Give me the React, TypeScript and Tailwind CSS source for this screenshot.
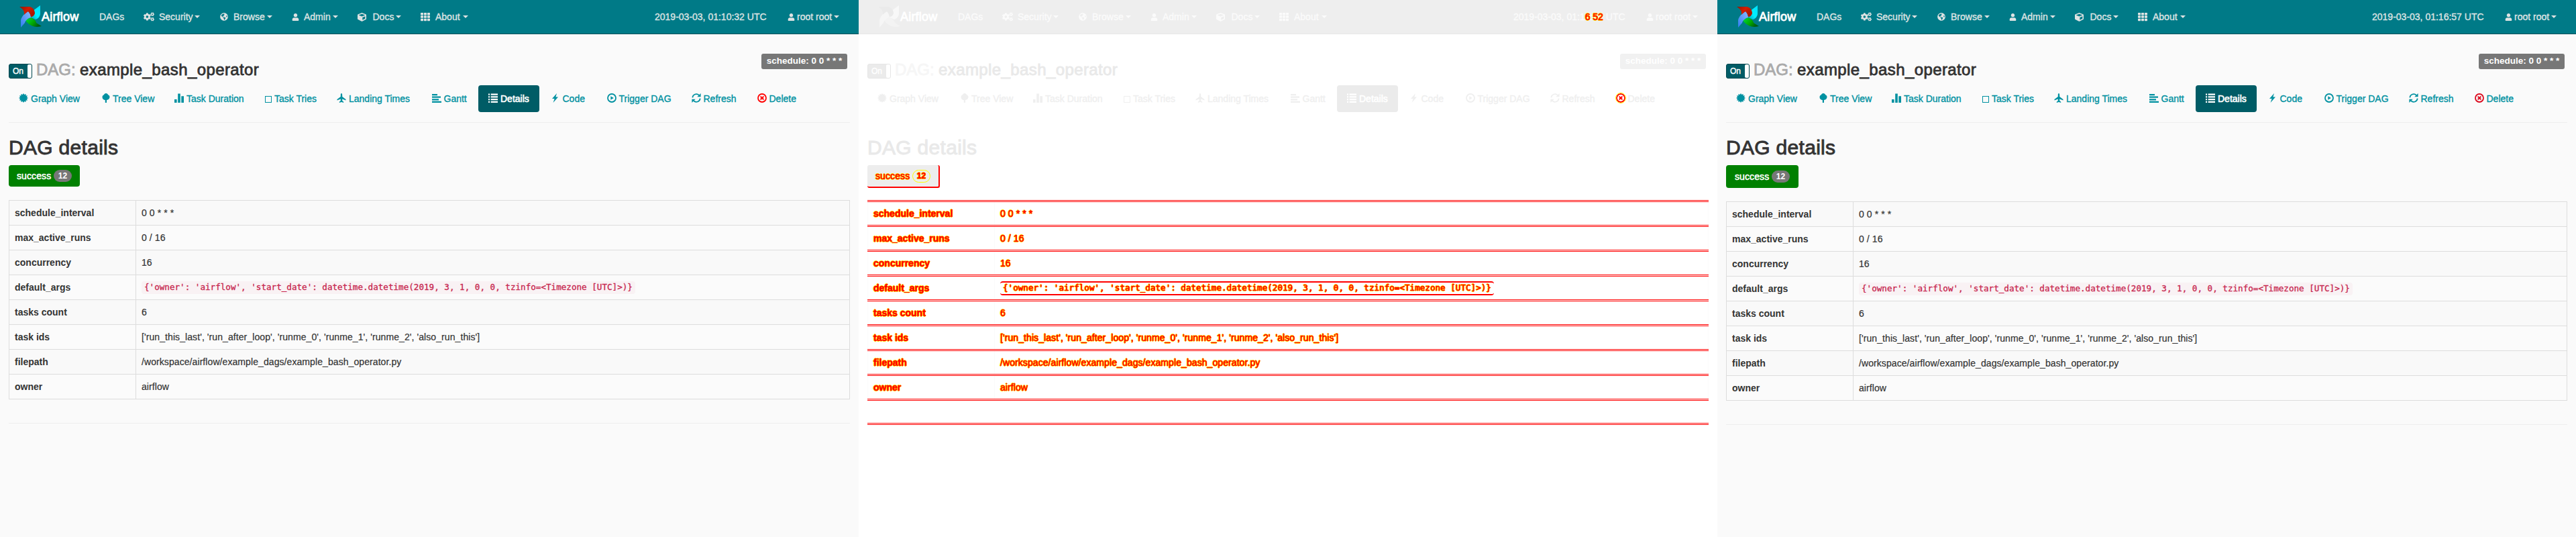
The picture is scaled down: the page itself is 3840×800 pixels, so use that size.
import React from "react";
import { FaCogs, FaGlobeAmericas, FaUser, FaCube, FaTh } from "react-icons/fa";

type Variant = "before" | "diff" | "after";

const G = ({ children }: { children: React.ReactNode }) => (
  <svg viewBox="0 0 14 14" className="block h-[14px] w-[14px]" fill="currentColor">
    {children}
  </svg>
);

const burst = Array.from({ length: 24 }, (_, i) => {
  const r = i % 2 ? 5.1 : 7;
  const a = (i * Math.PI) / 12;
  return `${(7 + r * Math.sin(a)).toFixed(2)},${(7 - r * Math.cos(a)).toFixed(2)}`;
}).join(" ");

const icons: Record<string, React.ReactNode> = {
  graph: <G><polygon points={burst} /></G>,
  tree: (
    <G>
      <path d="M6 0c1.600 0 2.700 1 3 2.200C10.600 2.700 11.600 4 11.500 5.500c0 2-1.500 3.700-3.500 4.300L7 10v4H4.800v-4C2.300 9.900.5 8 .5 5.700c0-1.500 1-2.900 2.400-3.400C3.200 1 4.500 0 6 0z" />
    </G>
  ),
  stats: <G><path d="M0 9h3.600v5H0zM5.200 0.600h3.600V14H5.200zM10.300 4.200H14V14h-3.700z" /></G>,
  box: (
    <svg viewBox="0 0 10 10" className="mt-[3px] block h-[10px] w-[10px]" fill="none" stroke="currentColor">
      <rect x="0.500" y="0.500" width="9" height="9" />
    </svg>
  ),
  plane: (
    <G>
      <path d="M7 0c.8 0 1.200 1.300 1.200 2.500v2.600L13.500 9v1.500L8.200 8.600V11l2 1.800V14L7 13l-3.200 1v-1.200l2-1.800V8.600L.5 10.500V9l5.300-3.900V2.500C5.800 1.300 6.200 0 7 0z" />
    </G>
  ),
  gantt: <G><path d="M0 1h8v2.200H0zM0 4.600h13v2.200H0zM0 8.200h10v2.200H0zM0 11.800h14V14H0z" /></G>,
  list: (
    <G>
      <path d="M0 .5h2v2.200H0zM0 4.300h2v2.200H0zM0 8.100h2v2.200H0zM0 11.800h2V14H0zM3.600.5H14v2.200H3.600zM3.600 4.300H14v2.200H3.600zM3.600 8.100H14v2.200H3.600zM3.600 11.800H14V14H3.600z" />
    </G>
  ),
  flash: <G><path d="M7 0 0 8h3.600L1.600 14 9 5.500H5.400z" /></G>,
  play: (
    <G>
      <circle cx="7" cy="7" r="6" fill="none" stroke="currentColor" strokeWidth="1.800" />
      <path d="M5.300 4.200 9.800 7l-4.500 2.800z" />
    </G>
  ),
  refresh: (
    <G>
      <path d="M1.300 6.400A5.700 5.700 0 0 1 11 2.900M12.700 7.600A5.700 5.700 0 0 1 3 11.100" fill="none" stroke="currentColor" strokeWidth="1.700" />
      <path d="M13.600 0v5.300H8.300zM.4 14V8.700h5.300z" />
    </G>
  ),
  remove: (
    <G>
      <circle cx="7" cy="7" r="6" fill="none" stroke="currentColor" strokeWidth="1.800" />
      <path d="m4.600 4.600 4.800 4.800M9.400 4.600 4.600 9.400" stroke="currentColor" strokeWidth="2" />
    </G>
  ),
};

const Pinwheel = ({ faded }: { faded: boolean }) => (
  <svg viewBox="0 0 44 44" className="-my-1 block h-[44px] w-[44px] shrink-0">
    <defs>
      <linearGradient id="red" x1="0" y1="0" x2="1" y2="0.600">
        <stop offset="0" stopColor="#8c1a00" /><stop offset="0.500" stopColor="#d41c00" /><stop offset="1" stopColor="#a81600" />
      </linearGradient>
      <linearGradient id="green" x1="0" y1="0" x2="1" y2="0.500">
        <stop offset="0" stopColor="#00e040" /><stop offset="0.600" stopColor="#00a800" /><stop offset="1" stopColor="#005c10" />
      </linearGradient>
      <linearGradient id="cyan" x1="1" y1="0" x2="0" y2="1">
        <stop offset="0" stopColor="#00dfff" /><stop offset="0.550" stopColor="#00f0ff" /><stop offset="1" stopColor="#00a0b8" />
      </linearGradient>
      <linearGradient id="blue" x1="0" y1="1" x2="1" y2="0">
        <stop offset="0" stopColor="#2f7df0" /><stop offset="1" stopColor="#8cb8ff" />
      </linearGradient>
    </defs>
    <path d="M36 5v12c0 4-3 8-7 9l-7-3 2-9z" fill={faded ? "#f8f8f8" : "url(#cyan)"} />
    <path d="M22 23c4 2 8 5 8 8l8 5c-4 1-9 1.500-13 0s-9-5-11-9z" fill={faded ? "#f3f3f3" : "url(#green)"} />
    <path d="M22 23c-4 1-8 4-9 8l-6 7V27c1-5 6-11 11-13 2 2 4 5 4 9z" fill={faded ? "#f6f6f6" : "url(#blue)"} />
    <path d="M5 7h15c5 1 8 5 8 10-1 3-3 5-6 5-1-4-2-6-4-8-2 1-4 3-6 5 1-5-2-9-7-12z" fill={faded ? "#eaeaea" : "url(#red)"} />
  </svg>
);

const Caret = () => (
  <span className="h-0 w-0 border-x-[4px] border-t-[4px] border-x-transparent border-t-current" />
);

const navItems = [
  { icon: <FaCogs size={16} />, label: "Security", w: "w-[114px]", slot: "w-[23px]", text: "w-[53px]" },
  { icon: <FaGlobeAmericas size={12} />, label: "Browse", w: "w-[107px]", slot: "w-[20px]", text: "w-[50px]" },
  { icon: <FaUser size={11} />, label: "Admin", w: "w-[98px]", slot: "w-[18px]", text: "w-[43px]" },
  { icon: <FaCube size={13} />, label: "Docs", w: "w-[94px]", slot: "w-[22.5px]", text: "w-[34px]" },
  { icon: <FaTh size={14} />, label: "About", w: "w-[80px]", slot: "w-[22px]", text: "w-[40.5px]" },
];

const tabs = [
  { icon: "graph", label: "Graph View", w: "w-[123.5px]", slot: "w-[18px]" },
  { icon: "tree", label: "Tree View", w: "w-[108.5px]", slot: "w-[16.5px]" },
  { icon: "stats", label: "Task Duration", w: "w-[135px]", slot: "w-[18px]" },
  { icon: "box", label: "Task Tries", w: "w-[107px]", slot: "w-[14px]" },
  { icon: "plane", label: "Landing Times", w: "w-[141.5px]", slot: "w-[18px]" },
  { icon: "gantt", label: "Gantt", w: "w-[69.5px]", slot: "w-[18px]" },
  { icon: "list", label: "Details", w: "w-[91px]", slot: "w-[18px]" },
  { icon: "flash", label: "Code", w: "w-[81.5px]", slot: "w-[15.5px]" },
  { icon: "play", label: "Trigger DAG", w: "w-[126px]", slot: "w-[18px]" },
  { icon: "refresh", label: "Refresh", w: "w-[98px]", slot: "w-[18px]" },
  { icon: "remove", label: "Delete", w: "w-[60px]", slot: "w-[18px]" },
];

const details = [
  ["schedule_interval", "0 0 * * *"],
  ["max_active_runs", "0 / 16"],
  ["concurrency", "16"],
  ["default_args", "{'owner': 'airflow', 'start_date': datetime.datetime(2019, 3, 1, 0, 0, tzinfo=<Timezone [UTC]>)}"],
  ["tasks count", "6"],
  ["task ids", "['run_this_last', 'run_after_loop', 'runme_0', 'runme_1', 'runme_2', 'also_run_this']"],
  ["filepath", "/workspace/airflow/example_dags/example_bash_operator.py"],
  ["owner", "airflow"],
];

const marked =
  "text-[#ff0000] [-webkit-text-stroke:0.6px_#ff0000] [text-shadow:1px_0_#ffff00,-1px_0_#ffff00,0_1px_#ffff00,0_-1px_#ffff00]";

const themes = {
  normal: {
    page: "bg-[#fafafa]",
    nav: "bg-[#007a87] border-[#004f59] text-[#dfe3e3]",
    brand: "text-white",
    toggle: "border-[#00474f] bg-[#005c66] text-white",
    muted: "text-[#aaaaaa]",
    heading: "text-[#333333]",
    tab: "text-[#0091a1]",
    active: "bg-[#005c66] text-white",
    badge: "bg-[#777777] text-white",
    rule: "bg-[#eeeeee]",
  },
  diff: {
    page: "bg-white",
    nav: "bg-[#eeeeee] border-[#e6e6e6] text-[#fbfbfb]",
    brand: "text-white",
    toggle: "border-[#e6e6e6] bg-[#ebebeb] text-white",
    muted: "text-[#f6f6f6]",
    heading: "text-[#e9e9e9]",
    tab: "text-[#efefef]",
    active: "bg-[#ebebeb] text-white",
    badge: "bg-[#f1f1f1] text-white",
    rule: "bg-white",
  },
};

const removeColor: Record<Variant, string> = {
  before: "text-[#ff0000]",
  diff: "text-[#ff0000]",
  after: "text-[#dc0a1e]",
};

const DoubleLine = () => <div className="h-[3px] w-full shrink-0 border-y border-[#ff0000]" />;

const StateButton = ({ variant }: { variant: Variant }) => {
  if (variant === "diff") {
    return (
      <div className="flex h-[34px] w-[108px] items-center rounded-[3px] border-r-2 border-b-2 border-[#ff0000] bg-[#ededed] pl-[12px] text-[14px]">
        <span className={`w-[55px] tracking-[0.1px] ${marked}`}>success</span>
        <span className={`flex h-[19px] w-[27px] items-center justify-center rounded-full border border-[#ffff00] text-[12px] font-bold ${marked}`}>12</span>
      </div>
    );
  }
  const size = variant === "before" ? "h-[32px] w-[106px] pl-[12px]" : "h-[34px] w-[108px] pl-[13px]";
  return (
    <div className={`flex items-center rounded-[4px] bg-[#008000] text-[14px] text-white ${size}`}>
      <span className="w-[55px] tracking-[0.1px] [-webkit-text-stroke:0.5px]">success</span>
      <span className="flex h-[18px] w-[27px] items-center justify-center rounded-full bg-[#777777] text-[12px] font-bold">12</span>
    </div>
  );
};

const DetailTable = ({ variant }: { variant: Variant }) => {
  if (variant === "diff") {
    return (
      <div className="mt-[18px] w-[1254px] text-[14px] leading-5">
        <DoubleLine />
        {details.map(([key, value]) => (
          <div key={key}>
            <div className="flex h-[34px] items-center border-x border-[#fbfbfb]">
              <div className="flex h-full w-[188px] items-center pl-[8px] font-bold">
                <span className={marked}>{key}</span>
              </div>
              <div className="flex h-full items-center border-l border-[#fbfbfb] pl-[8px]">
                {key === "default_args" ? (
                  <code className="my-auto flex h-[21px] items-center rounded-[4px] border-y-2 border-[#ff0000] px-[4px] font-['DejaVu_Sans_Mono',monospace] text-[12.6px] whitespace-pre">
                    <span className={marked}>{value}</span>
                  </code>
                ) : (
                  <span className={`tracking-[0.08px] ${marked}`}>{value}</span>
                )}
              </div>
            </div>
            <DoubleLine />
          </div>
        ))}
        <div className="mt-[33px]"><DoubleLine /></div>
      </div>
    );
  }
  return (
    <div className="mt-[20px] w-[1254px] text-[14px] leading-5 text-[#333333]">
      <div className="border-x border-t border-[#dddddd]">
        {details.map(([key, value]) => (
          <div key={key} className="flex h-[37px] border-b border-[#dddddd] odd:bg-[#f9f9f9] even:bg-[#fbfbfb]">
            <div className="flex w-[188px] items-center pl-[8px] font-bold">{key}</div>
            <div className="flex items-center border-l border-[#dddddd] pl-[8px] [-webkit-text-stroke:0.2px]">
              {key === "default_args" ? (
                <code className="flex h-[19px] items-center rounded-[4px] bg-[#f9f2f4] px-[4px] font-['DejaVu_Sans_Mono',monospace] text-[12.6px] whitespace-pre text-[#c7254e] [-webkit-text-stroke:0.3px]">
                  {value}
                </code>
              ) : (
                <span className="tracking-[0.08px]">{value}</span>
              )}
            </div>
          </div>
        ))}
      </div>
      <div className="mt-[35px] h-px bg-[#eeeeee]" />
    </div>
  );
};

const Panel = ({ variant, clock }: { variant: Variant; clock: string }) => {
  const diff = variant === "diff";
  const t = diff ? themes.diff : themes.normal;
  return (
    <section className={`h-[800px] w-[1280px] shrink-0 overflow-hidden ${t.page}`}>
      <nav className={`flex h-[51px] items-center border-b text-[14px] leading-5 [-webkit-text-stroke:0.35px] ${t.nav}`}>
        <div className="flex w-[148px] items-center pl-[24px]">
          <Pinwheel faded={diff} />
          <span className={`-ml-[6px] text-[18px] tracking-[0.2px] [-webkit-text-stroke:0.8px] ${t.brand}`}>Airflow</span>
        </div>
        <span className="w-[66px]">DAGs</span>
        {navItems.map((n) => (
          <div key={n.label} className={`flex items-center ${n.w}`}>
            <span className={`shrink-0 ${n.slot}`}>{n.icon}</span>
            <span className={`shrink-0 ${n.text}`}>{n.label}</span>
            <Caret />
          </div>
        ))}
        <span className="ml-[269px] w-[198px] whitespace-nowrap">
          {diff ? (
            <>2019-03-03, 01:1<span className={marked}>6</span>:<span className={marked}>52</span> UTC</>
          ) : (
            clock
          )}
        </span>
        <FaUser size={11} />
        <span className="ml-[3px] w-[55px] whitespace-nowrap">root root</span>
        <Caret />
      </nav>

      <main className="pl-[13px]">
        <div className="flex items-start justify-between pt-[29px] pr-[17px]">
          <h1 className="mt-[11px] flex h-[26px] text-[24px] leading-[26px]">
            <span className={`mt-[4px] flex h-[22px] w-[35px] items-center justify-between rounded-[3px] border pl-[5px] text-[12px] leading-5 [-webkit-text-stroke:0.4px] ${t.toggle}`}>
              On
              <span className="h-[20px] w-[6px] rounded-[2px] bg-white" />
            </span>
            <span className={`ml-[6px] w-[65px] [-webkit-text-stroke:0.8px] ${t.muted}`}>DAG:</span>
            <span className={`tracking-[0.4px] [-webkit-text-stroke:0.8px] ${t.heading}`}>example_bash_operator</span>
          </h1>
          <span className={`flex h-[23px] w-[128px] items-center justify-center rounded-[3px] text-[13.5px] font-bold whitespace-nowrap ${t.badge}`}>
            schedule: 0 0 * * *
          </span>
        </div>

        <div className="mt-[10px] flex h-[40px] text-[14px] leading-5 [-webkit-text-stroke:0.35px]">
          {tabs.map((tab) => {
            const active = tab.label === "Details";
            const first = tab.label === "Graph View";
            const removal = tab.icon === "remove";
            return (
              <div
                key={tab.label}
                className={`flex h-[40px] shrink-0 items-center whitespace-nowrap ${tab.w} ${
                  active ? `mr-[19px] rounded-[4px] pl-[15px] [-webkit-text-stroke:0.6px] ${t.active}` : t.tab
                } ${first ? "ml-[15px]" : ""}`}
              >
                <span className={`-mt-[2px] shrink-0 ${tab.slot} ${removal ? removeColor[variant] : ""}`}>
                  {removal && diff ? (
                    <span className="block w-[14px] rounded-full outline outline-[#ffff00]">{icons[tab.icon]}</span>
                  ) : (
                    icons[tab.icon]
                  )}
                </span>
                {tab.label}
              </div>
            );
          })}
        </div>

        <div className={`mt-[15px] h-px w-[1254px] ${t.rule}`} />
        <h2 className={`mt-[20px] mb-[10px] text-[30px] leading-[33px] tracking-[0.3px] [-webkit-text-stroke:0.9px] ${t.heading}`}>
          DAG details
        </h2>
        <StateButton variant={variant} />
        <DetailTable variant={variant} />
      </main>
    </section>
  );
};

export default function App() {
  return (
    <div className="flex h-[800px] w-[3840px] overflow-hidden font-['Liberation_Sans',sans-serif]">
      <Panel variant="before" clock="2019-03-03, 01:10:32 UTC" />
      <Panel variant="diff" clock="2019-03-03, 01:16:52 UTC" />
      <Panel variant="after" clock="2019-03-03, 01:16:57 UTC" />
    </div>
  );
}
